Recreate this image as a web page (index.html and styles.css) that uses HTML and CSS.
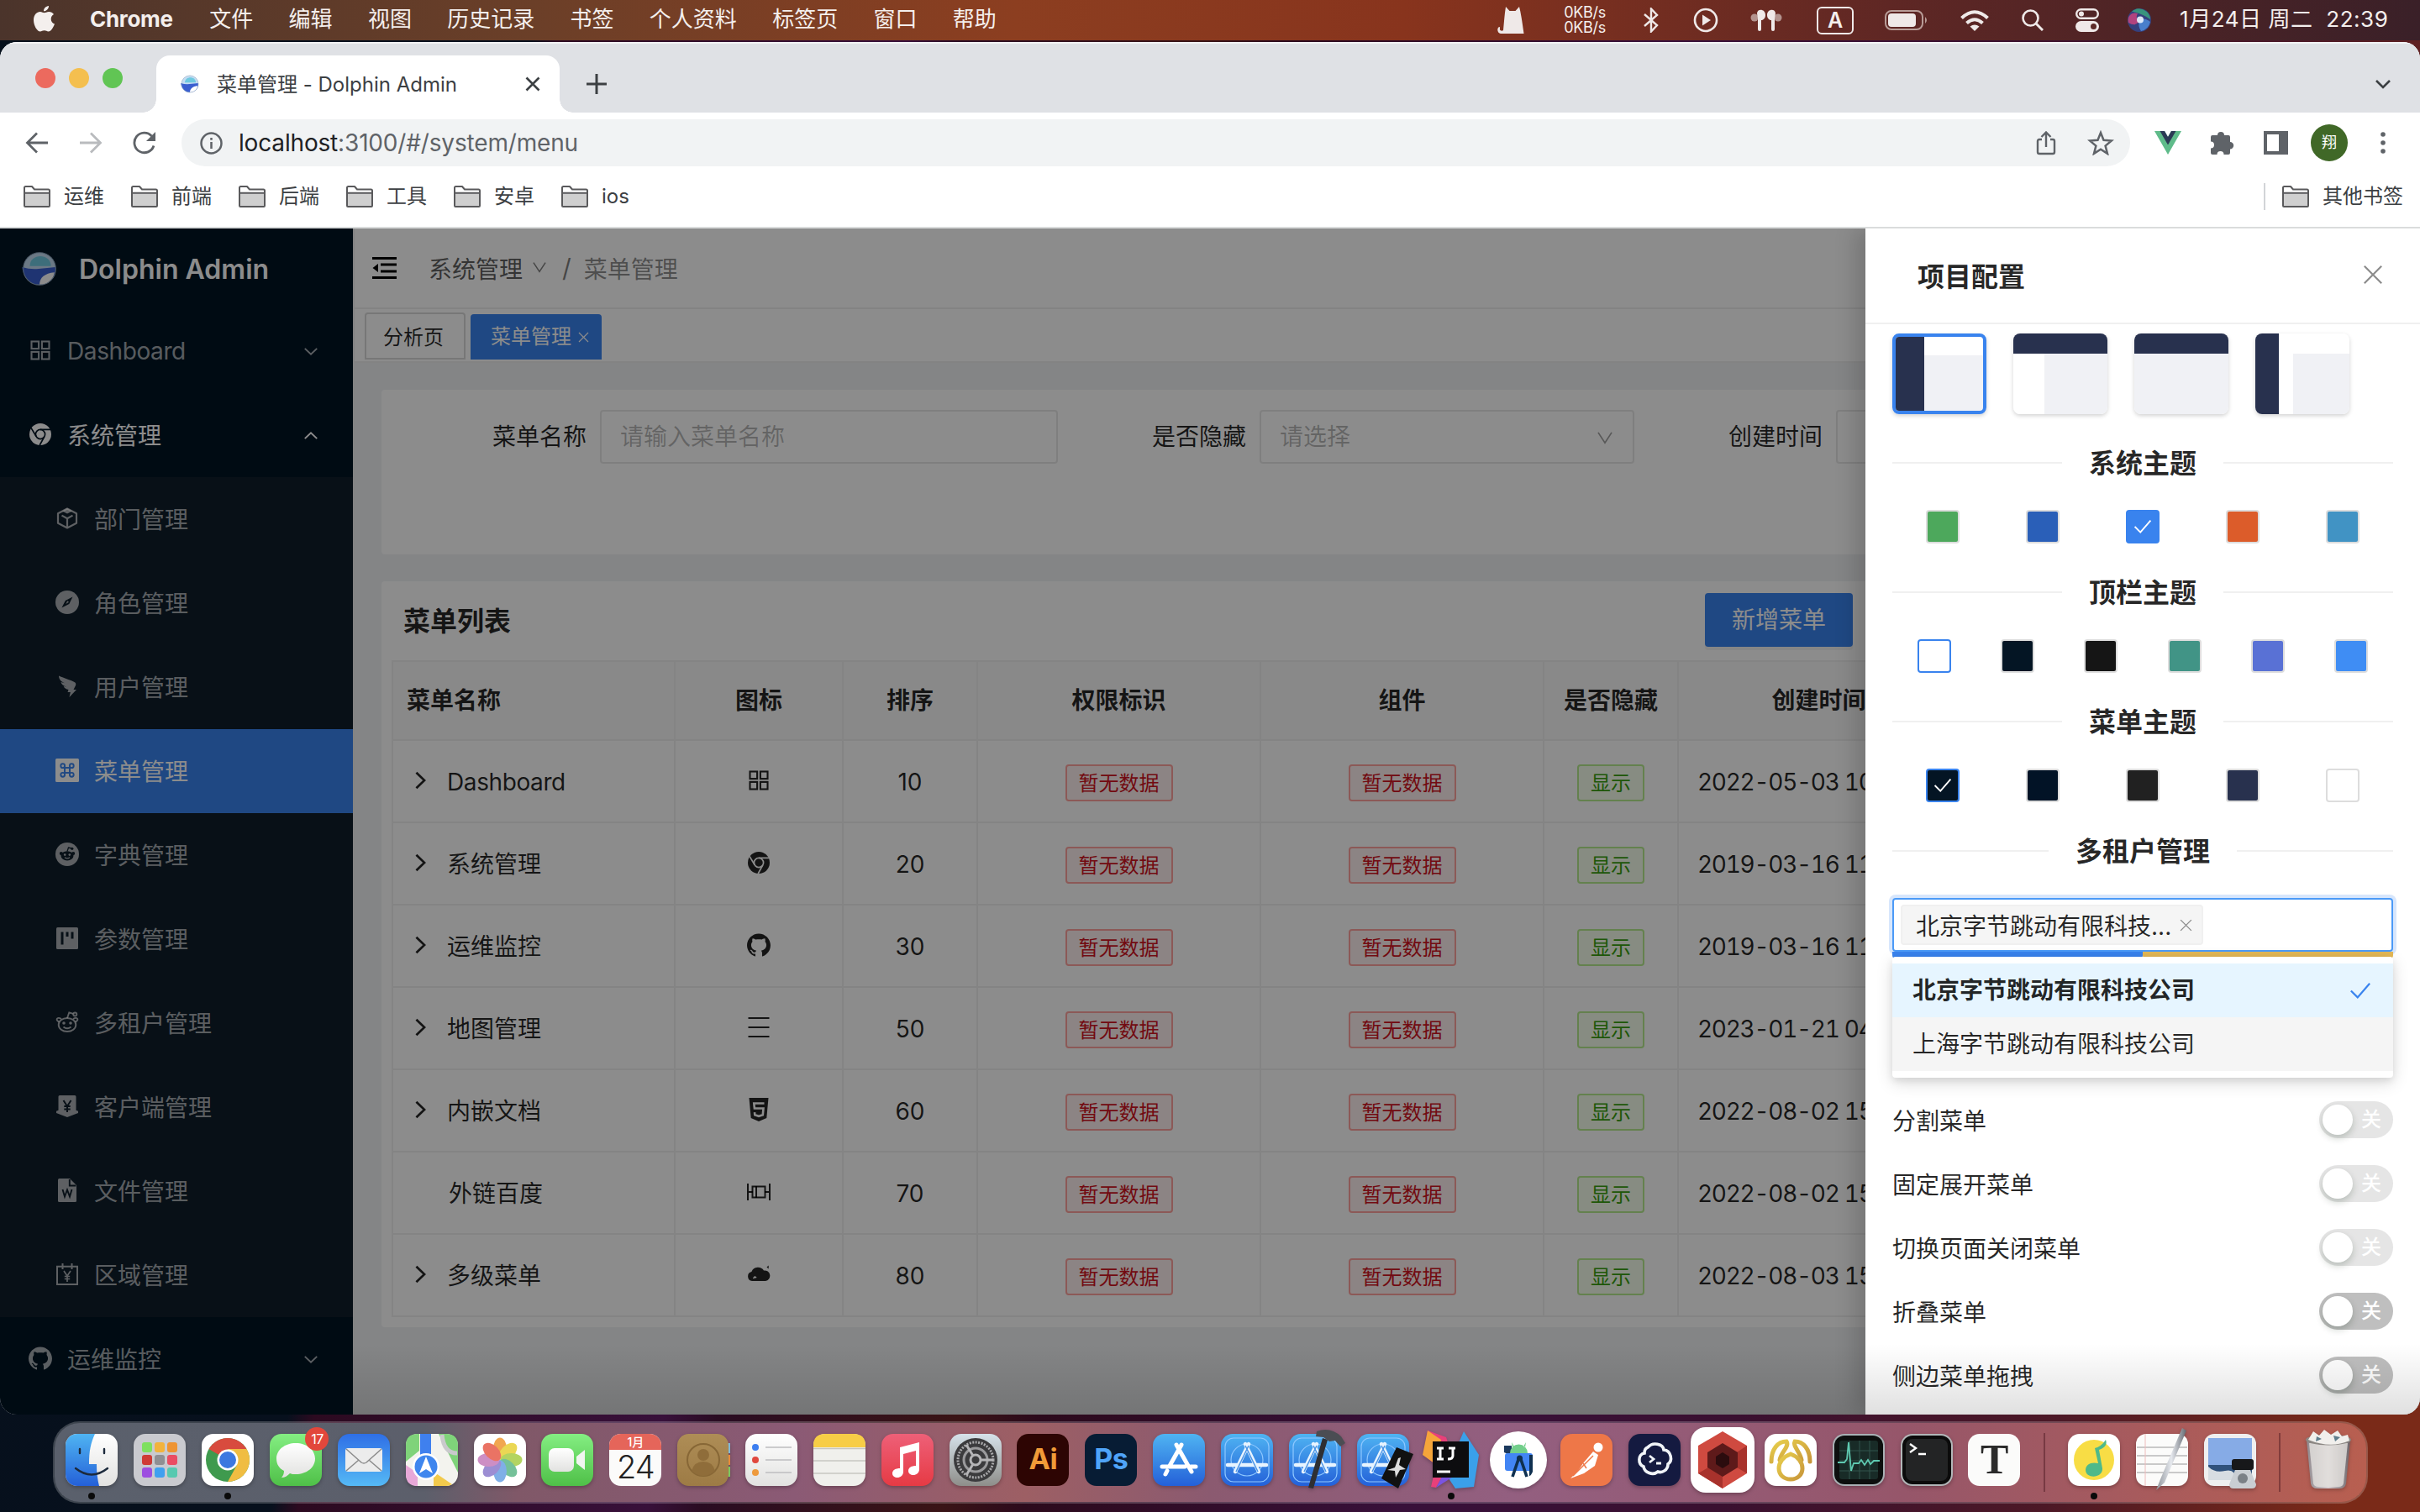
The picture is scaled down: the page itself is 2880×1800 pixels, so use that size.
FILE: index.html
```html
<!DOCTYPE html>
<html lang="zh-CN">
<head>
<meta charset="utf-8">
<title>菜单管理 - Dolphin Admin</title>
<link rel="stylesheet" href="styles.css">
</head>
<body>
<svg class="defs" width="0" height="0">
  <defs>
    <linearGradient id="g-blue" x1="0" y1="0" x2="0" y2="1"><stop offset="0" stop-color="#4fb4f2"/><stop offset="1" stop-color="#2460d8"/></linearGradient>
    <linearGradient id="g-mail" x1="0" y1="0" x2="0" y2="1"><stop offset="0" stop-color="#2f6fe6"/><stop offset="1" stop-color="#55b9f5"/></linearGradient>
    <linearGradient id="g-green" x1="0" y1="0" x2="0" y2="1"><stop offset="0" stop-color="#84ee82"/><stop offset="1" stop-color="#4fc048"/></linearGradient>
    <linearGradient id="g-red" x1="0" y1="0" x2="0" y2="1"><stop offset="0" stop-color="#ee6078"/><stop offset="1" stop-color="#e63a44"/></linearGradient>
    <linearGradient id="g-white" x1="0" y1="0" x2="0" y2="1"><stop offset="0" stop-color="#ffffff"/><stop offset="1" stop-color="#e2e2e0"/></linearGradient>
    <linearGradient id="g-gray" x1="0" y1="0" x2="0" y2="1"><stop offset="0" stop-color="#d6e2ea"/><stop offset="1" stop-color="#8e8e8a"/></linearGradient>
    <linearGradient id="g-gold" x1="0" y1="0" x2="1" y2="1"><stop offset="0" stop-color="#e8cf4c"/><stop offset="1" stop-color="#c8963a"/></linearGradient>
    <linearGradient id="g-brown" x1="0" y1="0" x2="0" y2="1"><stop offset="0" stop-color="#ae8d56"/><stop offset="1" stop-color="#9d7b45"/></linearGradient>
    <linearGradient id="g-steel" x1="0" y1="0" x2="1" y2="0"><stop offset="0" stop-color="#8d9299"/><stop offset=".5" stop-color="#e6e9ee"/><stop offset="1" stop-color="#62676f"/></linearGradient>
    <radialGradient id="g-siri"><stop offset="0" stop-color="#eaf6ff"/><stop offset=".35" stop-color="#5d8fd8"/><stop offset=".7" stop-color="#3a4a90"/><stop offset="1" stop-color="#37987a"/></radialGradient>
    <symbol id="i-appstore" viewBox="0 0 28 28"><g fill="none" stroke="currentColor" stroke-width="2.1"><rect x="3.5" y="3.5" width="8.6" height="8.6"/><rect x="15.9" y="3.5" width="8.6" height="8.6"/><rect x="3.5" y="15.9" width="8.6" height="8.6"/><rect x="15.9" y="15.9" width="8.6" height="8.6"/></g></symbol>
    <symbol id="i-chrome" viewBox="0 0 28 28"><circle cx="14" cy="14" r="13" fill="currentColor"/><g fill="none" stroke="var(--cut)" stroke-width="1.7"><circle cx="14" cy="14" r="5.6"/><path d="M14 8.4H26M9.2 16.8 3 6.4M18.8 16.8 13.2 27"/></g></symbol>
    <symbol id="i-github" viewBox="64 64 896 896"><path fill="currentColor" d="M511.6 76.3C264.3 76.2 64 276.4 64 523.5 64 718.9 189.3 885 363.8 946c23.5 5.9 19.9-10.8 19.9-22.2v-77.5c-135.7 15.9-141.2-73.9-150.3-88.9C215 726 171.5 718 184.5 703c30.9-15.9 62.4 4 98.9 57.9 26.4 39.1 77.9 32.5 104 26 5.7-23.5 17.9-44.5 34.7-60.8-140.6-25.2-199.2-111-199.2-213 0-49.5 16.3-95 48.3-131.7-20.4-60.5 1.9-112.3 4.9-120 58.1-5.2 118.5 41.6 123.2 45.3 33-8.9 70.7-13.6 112.9-13.6 42.4 0 80.2 4.9 113.5 13.9 11.3-8.6 67.3-48.8 121.3-43.9 2.9 7.7 24.7 58.3 5.5 118 32.4 36.8 48.9 82.7 48.9 132.3 0 102.2-59 188.1-200 212.9a127.5 127.5 0 0138.1 91v112.5c.8 9 0 17.9 15 17.9 177.1-59.7 304.6-227 304.6-424.1 0-247.2-200.4-447.3-447.5-447.3z"/></symbol>
    <symbol id="i-cube" viewBox="0 0 28 28"><path fill="none" stroke="currentColor" stroke-width="2.2" stroke-linejoin="round" d="M14 2.5 25 8.3v11.4L14 25.5 3 19.7V8.3zM14 25V14.5M7.5 10.6 14 14.3l6.5-3.7"/><path fill="currentColor" d="m14 2 6 3.4-6 3.2-6-3.2z"/></symbol>
    <symbol id="i-compass" viewBox="0 0 28 28"><circle cx="14" cy="14" r="14" fill="currentColor"/><path fill="var(--cut)" d="M20.5 7.5 16.3 16 7.5 20.5 11.8 12z"/><path fill="currentColor" d="m14.2 12.2 1.8 1.6-3.6 2.2z"/></symbol>
    <symbol id="i-wing" viewBox="0 0 28 28"><path fill="currentColor" d="M4 1.5c5 2.4 14 5 18.500 7.500 2 1 2 2.500 1.500 4l-2.500 5h3.500L16.500 27l1.300-6H14.500l1-3c-3-.5-5-2-5.800-4l3.300.6C9 13 7 11.500 6.500 9l4.500 1.200C7 8.500 4 6 4 1.500z"/></symbol>
    <symbol id="i-command" viewBox="0 0 28 28"><rect width="28" height="28" rx="1.500" fill="currentColor"/><g fill="none" stroke="var(--cut)" stroke-width="1.900"><rect x="11" y="11" width="6" height="6"/><circle cx="8.700" cy="8.700" r="2.400"/><circle cx="19.300" cy="8.700" r="2.400"/><circle cx="8.700" cy="19.300" r="2.400"/><circle cx="19.300" cy="19.300" r="2.400"/></g></symbol>
    <symbol id="i-reddit-f" viewBox="0 0 28 28"><circle cx="14" cy="14" r="14" fill="currentColor"/><ellipse cx="14" cy="15.800" rx="7.500" ry="5.600" fill="var(--cut)"/><circle cx="6.800" cy="13" r="2" fill="var(--cut)"/><circle cx="21.200" cy="13" r="2" fill="var(--cut)"/><path d="M14 10.500 15.500 6l4 1" fill="none" stroke="var(--cut)" stroke-width="1.300"/><circle cx="19.800" cy="7.300" r="1.600" fill="var(--cut)"/><circle cx="11.200" cy="14.600" r="1.300" fill="currentColor"/><circle cx="16.800" cy="14.600" r="1.300" fill="currentColor"/><path d="M11 17.800q3 2.200 6 0" fill="none" stroke="currentColor" stroke-width="1.200"/></symbol>
    <symbol id="i-reddit" viewBox="0 0 28 28"><g fill="none" stroke="currentColor" stroke-width="1.900"><ellipse cx="14" cy="17" rx="10.300" ry="8"/><path d="M4.500 13.500C-.5 12 1.500 6.500 7 10M23.500 13.500C28.500 12 26.500 6.500 21 10M14 9l2.300-6.500 5 1.400"/><circle cx="23.300" cy="4.500" r="2"/><path d="M9.500 19.500q4.500 3.600 9 0"/></g><circle cx="10" cy="15" r="1.800" fill="currentColor"/><circle cx="18" cy="15" r="1.800" fill="currentColor"/></symbol>
    <symbol id="i-project" viewBox="0 0 28 28"><rect x="1" y="1" width="26" height="26" rx="1.500" fill="currentColor"/><path fill="var(--cut)" d="M6.500 6.500h3v15h-3zM12.500 6.500h3V12h-3zM18.500 6.500h3v8h-3z"/></symbol>
    <symbol id="i-badge" viewBox="0 0 28 28"><path fill="currentColor" d="M3.500 2.500Q3.500 1 5 1h18q1.500 0 1.500 1.500v16.300l2.500 1V22l-13 5L1 22v-2.200l2.500-1z"/><path fill="none" stroke="var(--cut)" stroke-width="2" d="m9.500 7 4.500 7 4.500-7M14 13v8M10.300 14h7.400M10.300 17.500h7.400"/></symbol>
    <symbol id="i-word" viewBox="0 0 28 28"><path fill="currentColor" d="M4.500 0H17l8 8v18.500Q25 28 23.500 28h-19Q3 28 3 26.500v-25Q3 0 4.500 0z"/><path fill="none" stroke="var(--cut)" stroke-width="1.900" d="M16.800 1v7.500h7.500M8.500 13l2.500 8.500 3-8 3 8 2.500-8.500"/></symbol>
    <symbol id="i-calyen" viewBox="0 0 28 28"><path fill="none" stroke="currentColor" stroke-width="2" d="M2 4.800h24V26H2zM8.500 1v7M19.500 1v7"/><path fill="none" stroke="currentColor" stroke-width="1.700" d="m10 10 4 6 4-6M14 15.500V23M10.800 16.500h6.400M10.800 19.500h6.400"/></symbol>
    <symbol id="i-bars" viewBox="0 0 28 28"><path stroke="currentColor" stroke-width="2" d="M1.500 3h25M1.500 14h25M1.500 25h25"/></symbol>
    <symbol id="i-html5" viewBox="0 0 28 28"><path fill="currentColor" d="M2.500 0h23l-2.200 24L14 28l-9.300-4z"/><path fill="none" stroke="var(--cut)" stroke-width="2.600" d="M20.500 6.500H8.300l.6 6h10.600l-.7 7.700-4.800 1.600-4.700-1.600-.3-3"/></symbol>
    <symbol id="i-flow" viewBox="0 0 28 28"><g fill="none" stroke="currentColor" stroke-width="2"><path d="M1 4v20M27 4v20M1 14h6M21 14h6M11 7v14"/><rect x="6.500" y="7.500" width="15" height="13"/></g></symbol>
    <symbol id="i-cloud" viewBox="0 0 28 28"><path fill="currentColor" d="M6 22a5.600 5.600 0 0 1-.6-11A8.300 8.300 0 0 1 20 9.500 6.300 6.300 0 0 1 22 22zM23.500 5.500l2.200-2v4z"/><path d="m7.500 19 1.800-2 1.800 1.200" fill="none" stroke="var(--cut)" stroke-width="1.600"/></symbol>
    <symbol id="i-down" viewBox="0 0 20 12"><path fill="none" stroke="currentColor" stroke-width="2.200" d="m2 2 8 7.500L18 2"/></symbol>
    <symbol id="i-down-thin" viewBox="0 0 20 18"><path fill="none" stroke="currentColor" stroke-width="1.800" d="m1.500 2 8.500 13L18.500 2"/></symbol>
    <symbol id="i-x" viewBox="0 0 20 20"><path fill="none" stroke="currentColor" stroke-width="1.800" d="m1.500 1.500 17 17m0-17-17 17"/></symbol>
    <symbol id="i-check" viewBox="0 0 28 22"><path fill="none" stroke="currentColor" stroke-width="2.400" d="m2 11 8.500 8.500L26 1.500"/></symbol>
    <symbol id="i-right" viewBox="0 0 14 24"><path fill="none" stroke="currentColor" stroke-width="3" d="m1.500 2 10.500 10L1.500 22"/></symbol>
    <symbol id="i-folder" viewBox="0 0 32 26"><path fill="#cfcfcf" d="M2 9h28v15H2z"/><path fill="none" stroke="#5a5a5c" stroke-width="2" stroke-linejoin="round" d="M1 24V2.500Q1 1 2.500 1H10l3 3.500h16.500Q31 4.500 31 6v18q0 1-1 1H2q-1 0-1-1zM1 8.700h30"/></symbol>
    <symbol id="i-dolphin" viewBox="0 0 44 40"><circle cx="22" cy="20" r="18.500" fill="#c3dcf3"/><path fill="#6fc9e0" d="M11 17C11 2 35 2 35 17z"/><path fill="#3a5fd0" d="M2 18q10 3 19 2 10-1 19-2c2 12-8 20-18 20S4 31 2 18z"/><path fill="#fff" d="M22 38c0-8 6-13 17-14-1 9-8 14-17 14z"/><circle cx="22" cy="20" r="18.500" fill="none" stroke="#8ea6bd" stroke-width="1"/></symbol>
    <symbol id="d-proto" viewBox="0 0 64 64"><rect x="1" y="1" width="62" height="62" rx="14" fill="url(#g-blue)"/><rect x="6" y="6" width="52" height="52" rx="10" fill="none" stroke="#8fc8ff" stroke-width="1.200"/><circle cx="32" cy="32" r="19" fill="none" stroke="#8fc8ff" stroke-width="1.200"/><path fill="none" stroke="#e8f4ff" stroke-width="4.500" stroke-linecap="round" d="m34 13-16 33M30 13l16 33M9 38h46"/><path stroke="#4b94e6" stroke-width="1.500" d="m34 15-15 31M30 15l15 31"/></symbol>
  </defs>
</svg>

<div class="screen">
  <header class="menubar">
    <svg class="apple" viewBox="0 0 25 31"><path fill="#f4efed" d="M18 0c.3 3-2.700 6.500-6 6.300C11.700 3.300 14.800.2 18 0zM12.500 8.300C14 8.300 15.600 7 18.300 7c2.200 0 4.300 1.200 5.700 3-5 3-4 9.800 1 11.500C23.600 25.500 20.800 30.500 17.600 30.500c-2 0-2.600-1.200-4.900-1.200s-3 1.200-4.900 1.200C4.600 30.500 0 24 0 17 0 10.600 4 7 7.700 7c2.200 0 3.600 1.300 4.800 1.300z"/></svg>
    <nav class="mb-menu"><b>Chrome</b><span>文件</span><span>编辑</span><span>视图</span><span>历史记录</span><span>书签</span><span>个人资料</span><span>标签页</span><span>窗口</span><span>帮助</span></nav>
    <div class="mb-status">
      <svg width="33" height="32" viewBox="0 0 33 32"><path fill="#efe9e8" d="M10 0l4.500 5h7L26 0c2 8 3 14 5.500 32H4C0 32-1 26 2 24c1.500 0 1 2 .8 3 1 2 3 2 4.200 1C8 18 8.500 9 10 0z"/></svg>
      <div class="kb"><span>0KB/s</span><span>0KB/s</span></div>
      <svg width="20" height="30" viewBox="0 0 20 30"><path fill="none" stroke="#efe9e8" stroke-width="2.400" d="M2 8l15 13-7 7.500V1.500L17 9 2 22"/></svg>
      <svg width="30" height="30" viewBox="0 0 30 30"><circle cx="15" cy="15" r="13" fill="none" stroke="#efe9e8" stroke-width="2.600"/><path fill="#efe9e8" d="M11 8.500 21 15l-10 6.500z"/></svg>
      <svg width="38" height="28" viewBox="0 0 38 28"><g fill="#efe9e8"><path d="M8 6c0-6 10-6 10 2 0 4-3 6-5 6v11q0 2-2 2t-2-2V12zM30 6c0-6-10-6-10 2 0 4 3 6 5 6v11q0 2 2 2t2-2V12z"/><circle cx="5" cy="11" r="4.500" opacity=".55"/><circle cx="33" cy="11" r="4.500" opacity=".55"/></g></svg>
      <div class="ime">A</div>
      <svg width="52" height="24" viewBox="0 0 52 24"><rect x="1" y="1" width="44" height="22" rx="7" fill="none" stroke="#b89c97" stroke-width="2"/><rect x="4" y="4" width="33" height="16" rx="4" fill="#efe9e8"/><path fill="#b89c97" d="M48 8q4 4 0 8z"/></svg>
      <svg width="34" height="25" viewBox="0 0 34 25"><g fill="none" stroke="#efe9e8" stroke-width="4"><path d="M1.500 9.500q15.500-14.500 31 0M7.500 15.500q9.500-8.500 19 0"/></g><path fill="#efe9e8" d="M11.500 19.500q5.500-4 11 0L17 25z"/></svg>
      <svg width="26" height="26" viewBox="0 0 26 26"><circle cx="10.500" cy="10.500" r="9" fill="none" stroke="#efe9e8" stroke-width="2.600"/><path stroke="#efe9e8" stroke-width="3" d="m17 17 8 8"/></svg>
      <svg width="28" height="28" viewBox="0 0 28 28"><rect x="1.200" y="1.200" width="25.600" height="10.600" rx="5.300" fill="none" stroke="#efe9e8" stroke-width="2.400"/><circle cx="7" cy="6.500" r="3" fill="#efe9e8"/><rect y="15" width="28" height="13" rx="6.500" fill="#efe9e8"/><circle cx="21.500" cy="21.500" r="3.500" fill="#5c2b28"/></svg>
      <svg width="28" height="28" viewBox="0 0 28 28"><circle cx="14" cy="14" r="14" fill="#35407e"/><path fill="#3aa27c" opacity=".85" d="M5 3.500Q14-3 23 4q4 4 4 9-8-6-22-9.500z"/><path fill="#c8447e" opacity=".85" d="M1 17C-1 8 6 4 12 6q-3 5 1 10-4 6-12 1z"/><path fill="#4f8fe0" opacity=".8" d="M14 14q6-4 13 2-2 9-11 11-4-6-2-13z"/><circle cx="15" cy="13.500" r="4" fill="#eef6ff" opacity=".9"/></svg>
      <time class="clock">1月24日 周二&nbsp; 22:39</time>
    </div>
  </header>

  <section class="window">
    <div class="tabstrip">
      <div class="lights"><i class="l-red"></i><i class="l-yellow"></i><i class="l-green"></i></div>
      <div class="tab"><svg class="fav" width="24" height="22"><use href="#i-dolphin"/></svg><span>菜单管理 - Dolphin Admin</span><svg class="tabx" viewBox="0 0 18 18"><path stroke="#3c4043" stroke-width="2.600" d="m1.500 1.500 15 15m0-15-15 15"/></svg></div>
      <svg class="plus" viewBox="0 0 24 24"><path stroke="#3c4043" stroke-width="3" d="M12 0v24M0 12h24"/></svg>
      <svg class="tabdown" viewBox="0 0 18 11"><path fill="none" stroke="#3c4043" stroke-width="2.600" d="m1 1 8 8 8-8"/></svg>
    </div>
    <div class="toolbar">
      <div class="navbtns">
        <svg width="28" height="26" viewBox="0 0 28 26"><path fill="none" stroke="#5f6368" stroke-width="2.800" d="M27 13H3M14 1.500 2.500 13 14 24.500"/></svg>
        <svg width="28" height="26" viewBox="0 0 28 26"><path fill="none" stroke="#b9bbbe" stroke-width="2.800" d="M1 13h24M14 1.500 25.500 13 14 24.500"/></svg>
        <svg width="28" height="28" viewBox="0 0 28 28"><path fill="none" stroke="#5f6368" stroke-width="2.800" d="M25 17.500A11.800 11.800 0 1 1 22.500 6"/><path fill="#5f6368" d="M27 1v11H16z"/></svg>
      </div>
      <div class="omnibox">
        <svg width="27" height="27" viewBox="0 0 27 27"><circle cx="13.500" cy="13.500" r="12" fill="none" stroke="#5f6368" stroke-width="2.500"/><path stroke="#5f6368" stroke-width="2.500" d="M13.500 12v8M13.500 7v2.700"/></svg>
        <span class="url"><em>localhost</em>:3100/#/system/menu</span>
        <svg class="share" width="24" height="30" viewBox="0 0 24 30"><path fill="none" stroke="#5f6368" stroke-width="2.400" d="M7 11H4q-2 0-2 2v13q0 2 2 2h16q2 0 2-2V13q0-2-2-2h-3M12 20V3M6.500 8 12 2.500 17.500 8"/></svg>
        <svg class="star" width="32" height="30" viewBox="0 0 32 30"><path fill="none" stroke="#5f6368" stroke-width="2.500" stroke-linejoin="miter" d="m16 3 3.500 8.800 9.400.7-7.300 6.100 2.400 9.300L16 22.800l-8 5.100 2.400-9.300-7.300-6.100 9.400-.7z"/></svg>
      </div>
      <div class="ext">
        <svg width="32" height="28" viewBox="0 0 32 28"><path fill="#5fbb8a" d="M0 0h12l4 7 4-7h12L16 28z"/><path fill="#2c3a55" d="M6.500 0H12l4 7 4-7h5.500L16 16.500z"/></svg>
        <svg width="30" height="30" viewBox="0 0 30 30"><path fill="#5f6368" d="M9 6a4 4 0 0 1 8 0h5q2 0 2 2v6a4.200 4.200 0 0 1 0 8.400V27q0 2-2 2h-5.500a4 4 0 0 0-8 0H3q-2 0-2-2v-5.500a4 4 0 0 0 0-8V8q0-2 2-2z"/></svg>
        <svg width="29" height="28" viewBox="0 0 29 28"><path fill="#5f6368" d="M0 0h29v28H0zm4 4v20h14V4z" fill-rule="evenodd"/></svg>
        <span class="avatar">翔</span>
        <svg width="6" height="28" viewBox="0 0 6 28"><g fill="#5f6368"><circle cx="3" cy="4" r="2.800"/><circle cx="3" cy="14" r="2.800"/><circle cx="3" cy="24" r="2.800"/></g></svg>
      </div>
    </div>
    <div class="bookmarks">
      <a><svg><use href="#i-folder"/></svg>运维</a><a><svg><use href="#i-folder"/></svg>前端</a><a><svg><use href="#i-folder"/></svg>后端</a><a><svg><use href="#i-folder"/></svg>工具</a><a><svg><use href="#i-folder"/></svg>安卓</a><a><svg><use href="#i-folder"/></svg>ios</a>
      <a class="other"><svg><use href="#i-folder"/></svg>其他书签</a>
    </div>

    <div class="app">
      <aside class="sidebar">
        <div class="brand"><svg width="46" height="42"><use href="#i-dolphin"/></svg><span>Dolphin Admin</span></div>
        <ul class="menu">
          <li class="top"><svg class="ic"><use href="#i-appstore"/></svg><span class="lat">Dashboard</span><svg class="arr"><use href="#i-down"/></svg></li>
          <li class="top open"><svg class="ic"><use href="#i-chrome"/></svg><span>系统管理</span><svg class="arr up"><use href="#i-down"/></svg></li>
          <li class="sub"><svg class="ic"><use href="#i-cube"/></svg><span>部门管理</span></li>
          <li class="sub"><svg class="ic"><use href="#i-compass"/></svg><span>角色管理</span></li>
          <li class="sub"><svg class="ic"><use href="#i-wing"/></svg><span>用户管理</span></li>
          <li class="sub active"><svg class="ic"><use href="#i-command"/></svg><span>菜单管理</span></li>
          <li class="sub"><svg class="ic"><use href="#i-reddit-f"/></svg><span>字典管理</span></li>
          <li class="sub"><svg class="ic"><use href="#i-project"/></svg><span>参数管理</span></li>
          <li class="sub"><svg class="ic"><use href="#i-reddit"/></svg><span>多租户管理</span></li>
          <li class="sub"><svg class="ic"><use href="#i-badge"/></svg><span>客户端管理</span></li>
          <li class="sub"><svg class="ic"><use href="#i-word"/></svg><span>文件管理</span></li>
          <li class="sub"><svg class="ic"><use href="#i-calyen"/></svg><span>区域管理</span></li>
          <li class="top"><svg class="ic"><use href="#i-github"/></svg><span>运维监控</span><svg class="arr"><use href="#i-down"/></svg></li>
        </ul>
      </aside>
      <main class="main">
        <div class="crumbs">
          <svg class="fold" viewBox="0 0 29 26"><path stroke="#000" stroke-width="2.800" d="M0 1.500h29M10 9h19M10 17h19M0 24.500h29"/><path d="M7 8v10l-6.500-5z"/></svg>
          <span class="c1">系统管理</span><svg class="cd"><use href="#i-down-thin"/></svg><span class="slash">/</span><span class="c2">菜单管理</span>
        </div>
        <div class="pagetabs"><span class="pt">分析页</span><span class="pt on">菜单管理<svg><use href="#i-x"/></svg></span></div>
        <div class="content">
          <section class="card filter">
            <label class="f1">菜单名称</label><div class="box b1">请输入菜单名称</div>
            <label class="f2">是否隐藏</label><div class="box b2">请选择<svg><use href="#i-down-thin"/></svg></div>
            <label class="f3">创建时间</label><div class="box b3"></div>
          </section>
          <section class="card list">
            <div class="list-head"><h2>菜单列表</h2><button>新增菜单</button></div>
            <table>
              <colgroup><col class="k1"><col class="k2"><col class="k3"><col class="k4"><col class="k5"><col class="k6"><col class="k7"></colgroup>
              <thead><tr><th class="nm">菜单名称</th><th>图标</th><th>排序</th><th>权限标识</th><th>组件</th><th>是否隐藏</th><th>创建时间</th></tr></thead>
              <tbody>
                <tr><td class="nm"><svg class="ex"><use href="#i-right"/></svg><span class="lat">Dashboard</span></td><td><svg class="ti"><use href="#i-appstore"/></svg></td><td>10</td><td><i class="tag r">暂无数据</i></td><td><i class="tag r">暂无数据</i></td><td><i class="tag g">显示</i></td><td class="dt">2022-05-03 10</td></tr>
                <tr><td class="nm"><svg class="ex"><use href="#i-right"/></svg>系统管理</td><td><svg class="ti"><use href="#i-chrome"/></svg></td><td>20</td><td><i class="tag r">暂无数据</i></td><td><i class="tag r">暂无数据</i></td><td><i class="tag g">显示</i></td><td class="dt">2019-03-16 11</td></tr>
                <tr><td class="nm"><svg class="ex"><use href="#i-right"/></svg>运维监控</td><td><svg class="ti"><use href="#i-github"/></svg></td><td>30</td><td><i class="tag r">暂无数据</i></td><td><i class="tag r">暂无数据</i></td><td><i class="tag g">显示</i></td><td class="dt">2019-03-16 11</td></tr>
                <tr><td class="nm"><svg class="ex"><use href="#i-right"/></svg>地图管理</td><td><svg class="ti"><use href="#i-bars"/></svg></td><td>50</td><td><i class="tag r">暂无数据</i></td><td><i class="tag r">暂无数据</i></td><td><i class="tag g">显示</i></td><td class="dt">2023-01-21 04</td></tr>
                <tr><td class="nm"><svg class="ex"><use href="#i-right"/></svg>内嵌文档</td><td><svg class="ti"><use href="#i-html5"/></svg></td><td>60</td><td><i class="tag r">暂无数据</i></td><td><i class="tag r">暂无数据</i></td><td><i class="tag g">显示</i></td><td class="dt">2022-08-02 15</td></tr>
                <tr><td class="nm leaf">外链百度</td><td><svg class="ti"><use href="#i-flow"/></svg></td><td>70</td><td><i class="tag r">暂无数据</i></td><td><i class="tag r">暂无数据</i></td><td><i class="tag g">显示</i></td><td class="dt">2022-08-02 15</td></tr>
                <tr><td class="nm"><svg class="ex"><use href="#i-right"/></svg>多级菜单</td><td><svg class="ti"><use href="#i-cloud"/></svg></td><td>80</td><td><i class="tag r">暂无数据</i></td><td><i class="tag r">暂无数据</i></td><td><i class="tag g">显示</i></td><td class="dt">2022-08-03 15</td></tr>
              </tbody>
            </table>
          </section>
        </div>
      </main>
      <div class="mask"></div>
      <aside class="drawer">
        <div class="dr-head"><h3>项目配置</h3><svg><use href="#i-x"/></svg></div>
        <div class="dr-body">
          <div class="thumbs"><div class="th t1"><i></i></div><div class="th t2"><i></i></div><div class="th t3"></div><div class="th t4"><i></i></div></div>
          <div class="divider"><span>系统主题</span></div>
          <div class="swatches"><i class="s-green"></i><i class="s-blue"></i><i class="s-main"><svg><use href="#i-check"/></svg></i><i class="s-orange"></i><i class="s-cyan"></i></div>
          <div class="divider"><span>顶栏主题</span></div>
          <div class="swatches"><i class="s-white sel"></i><i class="s-navy"></i><i class="s-black"></i><i class="s-teal"></i><i class="s-indigo"></i><i class="s-sky"></i></div>
          <div class="divider"><span>菜单主题</span></div>
          <div class="swatches"><i class="s-navy sel"><svg><use href="#i-check"/></svg></i><i class="s-navy2"></i><i class="s-dark"></i><i class="s-slate"></i><i class="s-white"></i></div>
          <div class="divider"><span>多租户管理</span></div>
          <div class="tenant">
            <div class="select"><span class="chip">北京字节跳动有限科技...<svg><use href="#i-x"/></svg></span></div>
            <div class="actions"><i></i><i></i></div>
            <div class="dropdown"><div class="opt cur">北京字节跳动有限科技公司<svg><use href="#i-check"/></svg></div><div class="opt">上海字节跳动有限科技公司</div></div>
          </div>
          <div class="switches">
            <div class="row"><span>分割菜单</span><b class="sw off">关</b></div>
            <div class="row"><span>固定展开菜单</span><b class="sw off">关</b></div>
            <div class="row"><span>切换页面关闭菜单</span><b class="sw off">关</b></div>
            <div class="row"><span>折叠菜单</span><b class="sw">关</b></div>
            <div class="row"><span>侧边菜单拖拽</span><b class="sw">关</b></div>
          </div>
        </div>
      </aside>
      <div class="shade"></div>
    </div>
  </section>

  <footer class="dock">
    <div class="d run"><svg viewBox="0 0 64 64"><rect x="1" y="1" width="62" height="62" rx="14" fill="url(#g-white)"/><path fill="url(#g-blue)" d="M15 1h21c-5 11-7 20-7 36h9c0 10 1 18 3 26H15A14 14 0 0 1 1 49V15A14 14 0 0 1 15 1z"/><path fill="none" stroke="#1c2a3c" stroke-width="2.400" stroke-linecap="round" d="M18 19v5M47 19v5M13 42q19 15 38 0"/></svg></div>
    <div class="d"><svg viewBox="0 0 64 64"><rect x="1" y="1" width="62" height="62" rx="14" fill="#c9cacf"/><g><rect x="11" y="11" width="12" height="12" rx="3" fill="#7ee05f"/><rect x="26" y="11" width="12" height="12" rx="3" fill="#f2b33c"/><rect x="41" y="11" width="12" height="12" rx="3" fill="#ee9432"/><rect x="11" y="26" width="12" height="12" rx="3" fill="#cf3b36"/><rect x="26" y="26" width="12" height="12" rx="3" fill="#8f8f93"/><rect x="41" y="26" width="12" height="12" rx="3" fill="#ea4d63"/><rect x="11" y="41" width="12" height="12" rx="3" fill="#9d4fe0"/><rect x="26" y="41" width="12" height="12" rx="3" fill="#3fa0f0"/><rect x="41" y="41" width="12" height="12" rx="3" fill="#57c9b0"/></g></svg></div>
    <div class="d run"><svg viewBox="0 0 64 64"><rect x="1" y="1" width="62" height="62" rx="14" fill="#fff"/><circle cx="32" cy="32" r="26" fill="#3f9a4e"/><path fill="#d84b3e" d="M32 32 9.500 19A26 26 0 0 1 54.500 19H32z"/><path fill="#f0bd42" d="M32 58a26 26 0 0 0 22.500-39H32l11 19z"/><circle cx="32" cy="32" r="12.500" fill="#fff"/><circle cx="32" cy="32" r="10" fill="#3c78e0"/></svg></div>
    <div class="d"><svg viewBox="0 0 64 64"><rect x="1" y="1" width="62" height="62" rx="14" fill="url(#g-green)"/><path fill="url(#g-white)" d="M32 12c13 0 23 8 23 18.500S45 49 32 49c-3 0-5 0-7-1-3 3-6 5-10 5 2-2 3-5 3-8C12 42 9 37 9 30.500 9 20 19 12 32 12z"/></svg><span class="badge">17</span></div>
    <div class="d"><svg viewBox="0 0 64 64"><rect x="1" y="1" width="62" height="62" rx="14" fill="url(#g-mail)"/><rect x="10" y="18" width="44" height="28" rx="3" fill="#ececec"/><path fill="none" stroke="#8b8b8b" stroke-width="1.500" d="m11 19 18 16q3 2 6 0l18-16M11 45l15-13M53 45 38 32"/></svg></div>
    <div class="d"><svg viewBox="0 0 64 64"><rect x="1" y="1" width="62" height="62" rx="14" fill="#f3f3ee"/><path fill="#7fd37a" d="M1 34V15Q1 1 15 1h2v20zM40 1h9q14 0 14 14v32z"/><path fill="#e7a8d8" d="M1 38l14 10v15Q1 63 1 49z"/><path fill="#f2ca4c" d="M34 63V46l22 15q-3 2-7 2z"/><path fill="#3f80ee" d="M18 1h13v30H18z"/><path fill="none" stroke="#c9c9cc" stroke-width="5" d="M44 2q2 22 18 22"/><circle cx="25" cy="40" r="16" fill="#fff"/><circle cx="25" cy="40" r="13.500" fill="#3f86ee"/><path fill="#fff" d="m25 28 8 20-8-5-8 5z"/></svg></div>
    <div class="d"><svg viewBox="0 0 64 64"><rect x="1" y="1" width="62" height="62" rx="14" fill="#fff"/><g opacity=".88"><ellipse cx="32" cy="18.500" rx="8" ry="13" fill="#f09a38"/><ellipse cx="32" cy="18.500" rx="8" ry="13" fill="#e8d23d" transform="rotate(45 32 32)"/><ellipse cx="32" cy="18.500" rx="8" ry="13" fill="#a9cf4c" transform="rotate(90 32 32)"/><ellipse cx="32" cy="18.500" rx="8" ry="13" fill="#63b98c" transform="rotate(135 32 32)"/><ellipse cx="32" cy="18.500" rx="8" ry="13" fill="#6ea5e4" transform="rotate(180 32 32)"/><ellipse cx="32" cy="18.500" rx="8" ry="13" fill="#8f7fce" transform="rotate(225 32 32)"/><ellipse cx="32" cy="18.500" rx="8" ry="13" fill="#c77fbc" transform="rotate(270 32 32)"/><ellipse cx="32" cy="18.500" rx="8" ry="13" fill="#e8604f" transform="rotate(315 32 32)"/></g></svg></div>
    <div class="d"><svg viewBox="0 0 64 64"><rect x="1" y="1" width="62" height="62" rx="14" fill="url(#g-green)"/><rect x="10" y="18" width="30" height="28" rx="7" fill="url(#g-white)"/><path fill="#f1f5f0" d="m43 28 10-8v24l-10-8z"/></svg></div>
    <div class="d cal"><div><b>1月</b><span>24</span></div></div>
    <div class="d"><svg viewBox="0 0 64 64"><path fill="#7fb8d8" d="M60 12h4v12h-4z"/><path fill="#e88a3a" d="M60 26h4v12h-4z"/><path fill="#7cc860" d="M60 40h4v12h-4z"/><rect x="1" y="1" width="61" height="62" rx="14" fill="url(#g-brown)"/><circle cx="32" cy="32" r="19" fill="none" stroke="#876736" stroke-width="2"/><circle cx="32" cy="26" r="7" fill="#8f6d3a"/><path fill="#8f6d3a" d="M18 45q3-11 14-11t14 11q-14 12-28 0z"/></svg></div>
    <div class="d"><svg viewBox="0 0 64 64"><rect x="1" y="1" width="62" height="62" rx="14" fill="url(#g-white)"/><path stroke="#bdbdc0" stroke-width="1.500" d="M25 17h31M25 32h31M25 47h31"/><g stroke-width="1.500"><circle cx="13" cy="17" r="4" fill="#3c7ef0"/><circle cx="13" cy="32" r="4" fill="#e0483e"/><circle cx="13" cy="47" r="4" fill="#ee9a3c"/></g></svg></div>
    <div class="d"><svg viewBox="0 0 64 64"><rect x="1" y="1" width="62" height="62" rx="14" fill="#f0f0ec"/><path fill="#f7cd46" d="M15 1h34q14 0 14 14v2H1v-2Q1 1 15 1z"/><path stroke="#c6c6c1" stroke-width="1.500" d="M1 18.500h62M1 33h62M1 48h62"/></svg></div>
    <div class="d"><svg viewBox="0 0 64 64"><rect x="1" y="1" width="62" height="62" rx="14" fill="url(#g-red)"/><path fill="#fff" d="M23 17 46 11v32c0 9-13 9-13 2 0-4 4-6 9-6V21l-15 4v21c0 9-13 9-13 2 0-4 4-6 9-6z"/></svg></div>
    <div class="d"><svg viewBox="0 0 64 64"><rect x="1" y="1" width="62" height="62" rx="14" fill="url(#g-gray)"/><circle cx="32" cy="32" r="26" fill="#3b3b3d"/><circle cx="32" cy="32" r="21" fill="none" stroke="#a9a9ab" stroke-width="3" stroke-dasharray="2 1.500"/><circle cx="32" cy="32" r="14" fill="none" stroke="#9a9a9c" stroke-width="3"/><circle cx="32" cy="32" r="6" fill="none" stroke="#b5b5b7" stroke-width="3"/><path stroke="#b5b5b7" stroke-width="3" d="M38 32h15M29 27l-8-13M29 37l-8 13"/></svg></div>
    <div class="d txt ai"><div>Ai</div></div>
    <div class="d txt ps"><div>Ps</div></div>
    <div class="d"><svg viewBox="0 0 64 64"><rect x="1" y="1" width="62" height="62" rx="14" fill="url(#g-blue)"/><path fill="none" stroke="#fff" stroke-width="5" stroke-linecap="round" d="M35 14 21 39M29 14l18 32M12 40h27M46 40h6M18 45l-2 4"/></svg></div>
    <div class="d"><svg><use href="#d-proto"/></svg></div>
    <div class="d"><svg viewBox="0 0 64 64" class="ov"><use href="#d-proto" width="64" height="64"/><path fill="#2e2f33" d="m41 6 6 2-17 58-6-1z"/><path fill="#4b4d53" d="M34-2q16-6 29 6l5 8-6 4-6-7-7 1-7-5-9-1z"/></svg></div>
    <div class="d"><svg viewBox="0 0 64 64" class="ov"><use href="#d-proto" width="64" height="64"/><path fill="#111" d="m48 17 20 8-18 41-20-12z"/><path fill="#ddd" d="m50 30 3-1-2 9 8 5-7 1-5 9-1-8-9-1 9-3z"/></svg></div>
    <div class="d run"><svg viewBox="0 0 64 64" class="ov"><path fill="#e8407a" d="m4-3 22 8 8 24-20 36-6-1 6-26L-1 26z"/><path fill="#f5a53a" d="M4-3-2 26l14 10 8-28z"/><path fill="#3aa0ea" d="m40 14 7-16 18 28-6 38-22 2-8-12z"/><path fill="#7a54e0" d="m14 65 28-18-16-4z"/><rect x="10" y="10" width="43" height="43" fill="#0d0d0f"/><path fill="none" stroke="#fff" stroke-width="3" d="M15 18h8M19 18v13M15 31h8M29 18h8M34 18v9q0 4-6 4M15 46h16"/></svg></div>
    <div class="d"><svg viewBox="0 0 64 64" class="ov"><circle cx="32" cy="32" r="34" fill="#fff"/><path fill="#1c3a5e" d="M15 15h9v12l-9-4z"/><rect x="16" y="24" width="33" height="21" rx="3" fill="#4285f4"/><path fill="#72cf8b" d="M22 24a10.500 10.500 0 0 1 21 0zM24 11l3 5-2 1zM41 11l-3 5 2 1z"/><path fill="none" stroke="#0f3050" stroke-width="3.600" d="M32.500 30 25 52M34.500 30 42 52"/><circle cx="33.500" cy="30" r="3.500" fill="#0f3050"/><path fill="#0f3050" d="M45 26h4v20q-2 5-4 5z"/></svg></div>
    <div class="d"><svg viewBox="0 0 64 64"><rect x="1" y="1" width="62" height="62" rx="14" fill="#ee7748"/><circle cx="46" cy="17" r="5.500" fill="#fff"/><path fill="#fff" d="m40 22 6 4-4 13-13 9-16 6 9-9 6-9z"/><path fill="none" stroke="#ee7748" stroke-width="1.500" d="m16 51 24-24M28 36l4 6"/></svg></div>
    <div class="d"><svg viewBox="0 0 64 64"><rect x="1" y="1" width="62" height="62" rx="14" fill="#141a40"/><path fill="none" stroke="#f0f4f8" stroke-width="3.600" d="M24 17c6-7 18-4 19 3 9 1 11 13 5 17 0 7-7 11-12 9-6 5-16 1-17-6-7-3-7-15 1-16 0-3 1-6 4-7z"/><path fill="none" stroke="#f0f4f8" stroke-width="2.800" d="m26 27 5 4-5 4M34 36h6"/></svg></div>
    <div class="d"><svg viewBox="0 0 64 64" class="ov"><rect x="-6" y="-7" width="76" height="78" rx="18" fill="#fff"/><path fill="#cf4a40" d="M32-2 61 15v33L32 66 3 48V15z"/><path fill="#a8322c" d="m61 15-12 8v18l12 7zM3 48l12-7 17 10v15z"/><path fill="#5e1a1a" d="m32 12 18 11v18L32 52 14 41V23z"/><path fill="#2b0c0e" d="m32 23 8 5v9l-8 5-8-5v-9z"/></svg></div>
    <div class="d"><svg viewBox="0 0 64 64"><rect x="1" y="1" width="62" height="62" rx="14" fill="#fff"/><path fill="none" stroke="url(#g-gold)" stroke-width="5" stroke-linecap="round" d="M9 34c0-15 8-24 18-24 4 6-6 12-8 22M55 34c0-15-8-24-18-24-3 5 6 12 8 22"/><path fill="#fff" stroke="url(#g-gold)" stroke-width="5" d="M32 25c9 3 14 10 14 17 0 8-6 13-14 13s-14-5-14-13c0-7 5-14 14-17z"/></svg></div>
    <div class="d"><svg viewBox="0 0 64 64"><rect x="1" y="1" width="62" height="62" rx="14" fill="#a9b0b4"/><rect x="3" y="3" width="58" height="58" rx="12" fill="#0c0f0e"/><rect x="9" y="9" width="46" height="46" rx="3" fill="#182b27"/><path stroke="#31544c" d="M9 21h46M9 33h46M9 45h46M21 9v46M33 9v46M45 9v46"/><path fill="none" stroke="#5ec9b0" stroke-width="1.800" d="M7 35h8l3-4 2-20 3 34 3-9h6l3-4 4 6 4-6 3 5 4-4h7"/></svg></div>
    <div class="d"><svg viewBox="0 0 64 64"><rect x="1" y="1" width="62" height="62" rx="14" fill="#b2b6b8"/><rect x="3" y="3" width="58" height="58" rx="12" fill="#0b0b0b"/><rect x="7" y="7" width="50" height="50" rx="8" fill="#232425"/><path fill="none" stroke="#fff" stroke-width="2.400" d="m12 13 7 5-7 5M22 25h9"/></svg></div>
    <div class="d txt ty"><div>T</div></div>
    <div class="sep"></div>
    <div class="d run"><svg viewBox="0 0 64 64"><rect x="1" y="1" width="62" height="62" rx="14" fill="#fff"/><circle cx="32" cy="32" r="24" fill="#f8dd45"/><path fill="#4fb98a" d="M46 8q3 8-8 12l4 22c1 12-20 13-20 2 0-7 7-10 15-8l-4-18q8-2 13-10z"/></svg></div>
    <div class="d"><svg viewBox="0 0 64 64" class="ov"><rect x="1" y="1" width="62" height="62" rx="12" fill="#fbfbfa"/><path stroke="#b9b9b9" stroke-width="1.500" d="M2 17h60M2 27h60M2 37h60M2 47h60"/><path stroke="#eebcbc" d="M12 1v62"/><path fill="url(#g-steel)" d="m56-6 5 3-26 62-10 9 5-13z"/></svg></div>
    <div class="d"><svg viewBox="0 0 64 64" class="ov"><rect x="1" y="1" width="62" height="62" rx="12" fill="#efefef"/><rect x="6" y="6" width="52" height="36" fill="#86abe6"/><path fill="#30527c" d="M6 38h52v18H6z"/><path fill="#d7dde2" d="M6 40q8 8 20 5t14 11H6z"/><rect x="34" y="31" width="26" height="13" rx="3" fill="#17181a"/><path fill="#c9ced3" d="M38 44h18l7 17q0 5-5 5H36q-5 0-5-5z"/><circle cx="47" cy="54" r="6" fill="#7b8187"/></svg></div>
    <div class="sep s2"></div>
    <div class="d"><svg viewBox="0 0 64 64" class="ov"><path fill="url(#g-steel)" opacity=".85" d="M6 8h52l-5 52q-1 6-8 6H19q-7 0-8-6z"/><path fill="#e3e1dd" opacity=".8" d="M9 12h46l-5 48q-1 4-6 4H20q-5 0-6-4z"/><ellipse cx="32" cy="8" rx="27" ry="6.500" fill="#8c8884"/><path fill="#f1efec" d="m8 8 6-10 7 5 6-7 8 6 8-5 5 7 7-2 2 7q-22 10-49-1z"/><path fill="#5f7d8c" d="m18 4 6 3-7 3zM38 3l8 2-6 5z"/></svg></div>
  </footer>
</div>
</body>
</html>
```
FILE: styles.css
```css
* { box-sizing: border-box; }
body { margin: 0; font-family: Inter, "Noto Sans CJK SC", sans-serif; }
ul, h2, h3 { margin: 0; padding: 0; list-style: none; }
i, em { font-style: normal; }
svg { display: block; flex: none; }
.defs { position: absolute; }

.screen {
  width: 2880px; height: 1800px; overflow: hidden;
  display: flex; flex-direction: column;
  background: linear-gradient(100deg, #06101c 0, #07101d 20%, #2c0a20 21%, #38103a 34%, #2a0c22 36%, #3a1416 45%, #2c0a1c 48%, #38103a 62%, #3a1030 74%, #4c1826 86%, #7a2a18 97%);
}

/* menu bar */
.menubar {
  height: 48px; flex: none; display: flex; align-items: center; color: #f4efed; font-size: 26px;
  background: linear-gradient(90deg, #4b342b 0, #6b3f28 22%, #8c3e20 42%, #88341d 58%, #5f2724 78%, #3a2028 100%);
}
.apple { width: 25px; height: 31px; margin: 0 42px 4px 40px; }
.mb-menu { display: flex; gap: 42.300px; line-height: 46px; height: 48px; }
.mb-menu b { font-weight: 700; letter-spacing: -.3px; width: 100px; }
.mb-status {
  margin-left: auto; width: 1112px; height: 48px; display: grid; align-items: center; justify-items: center;
  grid-template-columns: 60px 116px 42px 88px 56px 108px 62px 100px 38px 92px 32px 318px;
}
.kb { display: flex; flex-direction: column; font-size: 18px; line-height: 18px; letter-spacing: -.3px; }
.ime { width: 44px; height: 33px; border: 2.500px solid #efe9e8; border-radius: 6px; font-size: 25px; font-weight: 600; line-height: 28px; text-align: center; }
.clock { justify-self: start; padding-left: 32px; line-height: 46px; height: 48px; white-space: nowrap; letter-spacing: .55px; }

/* browser chrome */
.window { height: 1634px; margin-top: 2px; flex: none; width: 2880px; display: flex; flex-direction: column; background: #fff; border-radius: 20px; overflow: hidden; }
.tabstrip { height: 84px; flex: none; background: #dfe1e5; display: flex; box-shadow: inset 0 2px 0 #f2f2f4; }
.lights { display: flex; gap: 16px; padding: 31px 52px 0 42px; width: 186px; }
.lights i { width: 24px; height: 24px; border-radius: 50%; flex: none; }
.l-red { background: #ec6a5e; } .l-yellow { background: #f4bf4f; } .l-green { background: #61c554; }
.tab { position: relative; width: 480px; margin-top: 16px; height: 68px; border-radius: 16px 16px 0 0; background: #fff; display: flex; align-items: center; font-size: 24px; color: #3c4043; padding-left: 28px; }
.tab::before, .tab::after { content: ""; position: absolute; bottom: 0; width: 16px; height: 16px; }
.tab::before { left: -16px; background: radial-gradient(circle at 0 0, transparent 15.500px, #fff 16px); }
.tab::after { right: -16px; background: radial-gradient(circle at 100% 0, transparent 15.500px, #fff 16px); }
.tab span { margin-left: 20px; flex: 1; white-space: nowrap; padding-bottom: 4px; }
.tabx { width: 18px; height: 18px; margin-right: 23px; }
.plus { width: 24px; height: 24px; margin: 38px 0 0 32px; }
.tabdown { width: 18px; height: 11px; margin: 45px 35px 0 auto; }
.toolbar { height: 72px; flex: none; display: flex; align-items: center; }
.navbtns { display: flex; gap: 36px; width: 216px; padding-left: 30px; align-items: center; }
.omnibox { width: 2319px; height: 56px; border-radius: 28px; background: #f1f3f4; display: flex; align-items: center; padding: 0 19px 0 22px; font-size: 28px; color: #5f6368; }
.url { margin-left: 19px; flex: 1; letter-spacing: -.17px; }
.url em { color: #202124; }
.share { margin-right: 37px; margin-bottom: 1px; }
.ext { display: flex; align-items: center; padding-left: 29px; }
.ext > :nth-child(2) { margin-left: 34px; } .ext > :nth-child(3) { margin-left: 34px; }
.avatar { width: 44px; height: 44px; margin: 0 39px 0 27px; border-radius: 50%; background: #406827; color: #fff; font-size: 18px; line-height: 44px; text-align: center; }
.bookmarks { height: 64px; flex: none; display: flex; padding: 0 20px 8px 28px; align-items: center; font-size: 24px; color: #3c4043; }
.bookmarks a { width: 128px; display: flex; align-items: center; gap: 16px; white-space: nowrap; line-height: 32px; }
.bookmarks svg { width: 32px; height: 26px; }
.bookmarks .other { width: 166px; margin-left: auto; border-left: 2px solid #d2d4d7; padding-left: 20px; }

/* application */
.app { border-top: 2px solid #dadcdc; height: 1414px; flex: none; display: flex; position: relative; overflow: hidden; }
.sidebar { width: 420px; flex: none; background: #001424; color: rgba(255,255,255,.65); --cut: #0f1e2b; font-size: 28px; }
.brand { height: 96px; display: flex; align-items: center; gap: 24px; padding-left: 24px; color: #fff; font-weight: 600; font-size: 32px; }
.menu li { height: 100px; display: flex; align-items: center; }
.menu .ic { width: 28px; height: 28px; margin-bottom: 2px; }
.menu span { padding-bottom: 2px; }
.menu .lat { padding-bottom: 0; }
.top { padding: 0 41px 0 34px; --cut: #001424; }
.menu .top span { margin-left: 18px; flex: 1; }
.top.open { color: #fff; }
.arr { width: 18px; height: 11px; }
.up { transform: scaleY(-1); }
.sub { padding-left: 66px; background: #0f1e2b; }
.menu .sub span { margin-left: 18px; }
.menu .sub.active { background: #3983ee; color: #fff; --cut: #3983ee; }
.lat { letter-spacing: -.4px; }

.main { flex: 1; min-width: 0; background: #f0f2f5; border-left: 2px solid #eee; color: rgba(0,0,0,.85); font-size: 28px; }
.crumbs { height: 96px; background: #fff; border-bottom: 2px solid #eee; display: flex; align-items: center; padding: 0 0 1px 21px; }
.fold { width: 29px; height: 26px; margin-right: 38px; }
.c1 { color: rgba(0,0,0,.65); }
.cd { width: 18px; height: 15px; margin: 0 0 0 11px; color: rgba(0,0,0,.5); }
.slash { margin: 0 15px 0 18px; color: rgba(0,0,0,.5); font-size: 30px; }
.c2 { color: rgba(0,0,0,.45); }
.pagetabs { height: 64px; background: #fff; border-bottom: 2px solid #eee; display: flex; gap: 6px; align-items: flex-end; padding: 0 0 2px 12px; font-size: 24px; }
.pt { width: 120px; height: 56px; border: 2px solid #d9d9d9; border-radius: 4px 4px 0 0; padding-left: 20px; line-height: 56px; }
.pt.on { width: 156px; height: 54px; border: 0; background: #3983ee; color: #fff; padding-left: 24px; display: flex; align-items: center; }
.pt.on svg { width: 13px; height: 13px; margin-left: 8px; }
.content { padding: 32px; display: flex; flex-direction: column; gap: 32px; }
.card { background: #fff; border-radius: 4px; }
.filter { height: 196px; display: flex; padding-top: 24px; line-height: 65px; white-space: nowrap; overflow: hidden; }
.filter label { flex: none; width: 128px; }
.f1 { margin-left: 132px; } .f2 { margin-left: 112px; } .f3 { margin-left: 112px; }
.box { flex: none; height: 64px; border: 2px solid #e8e8e8; border-radius: 4px; padding-left: 22px; line-height: 60px; color: rgba(0,0,0,.28); display: flex; align-items: center; }
.b1 { width: 545px; } .b2 { width: 446px; padding-right: 22px; justify-content: space-between; } .b3 { width: 500px; }
.b2 svg { width: 22px; height: 17px; margin-top: 2px; color: #a0a0a0; }
.list { height: 888px; padding: 14px 12px 0; --cut: #fff; overflow: hidden; }
.list-head { display: flex; justify-content: space-between; align-items: center; padding: 0 631px 0 14px; height: 64px; }
.list h2 { font-size: 32px; font-weight: 600; padding-bottom: 3px; }
.list button { width: 176px; height: 64px; border: 0; border-radius: 4px; background: #3983ee; color: #fff; font: inherit; line-height: 63px; padding: 0; box-shadow: 0 4px 0 rgba(0,0,0,.045); }
table { margin-top: 16px; border-collapse: separate; border-spacing: 0; table-layout: fixed; width: 1867px; border-top: 2px solid #f0f0f0; border-left: 2px solid #f0f0f0; line-height: 44px; }
.k1 { width: 336px; } .k2 { width: 200px; } .k3 { width: 160px; } .k4 { width: 337px; } .k5 { width: 337px; } .k6 { width: 160px; } .k7 { width: 335px; }
th, td { padding: 0; text-align: center; border-right: 2px solid #f0f0f0; border-bottom: 2px solid #f0f0f0; white-space: nowrap; }
th { height: 94px; background: #fafafa; font-weight: 600; }
td { height: 98px; padding-top: 1px; }
th.nm { text-align: left; padding-left: 16px; }
td.nm { text-align: left; padding-left: 26px; }
td.leaf { padding-left: 66px; }
.ex { display: inline-block; width: 13px; height: 22px; margin-right: 25px; vertical-align: 1px; }
.ti { width: 28px; height: 28px; margin: 0 auto 4px; }
.tag { display: inline-block; vertical-align: middle; height: 44px; border: 2px solid; border-radius: 4px; padding: 0 14px; font-size: 24px; line-height: 41px; }
.tag.r { color: #cf1322; background: #fff1f0; border-color: #ffa39e; }
.tag.g { color: #389e0d; background: #f6ffed; border-color: #b7eb8f; }
td.dt { text-align: left; padding-left: 22px; letter-spacing: -1.300px; font-variant-numeric: tabular-nums; }

.mask { position: absolute; inset: 0; background: rgba(0,0,0,.45); }
.shade { position: absolute; left: 420px; right: 0; bottom: 0; height: 84px; background: linear-gradient(rgba(0,0,0,0), rgba(0,0,0,.12)); }

/* settings drawer */
.drawer { position: absolute; top: 0; right: 0; bottom: 0; width: 660px; background: #fff; box-shadow: -12px 0 24px rgba(0,0,0,.16); color: rgba(0,0,0,.85); font-size: 28px; }
.dr-head { height: 114px; border-bottom: 2px solid #f0f0f0; display: flex; justify-content: space-between; align-items: center; padding: 0 44px 0 62px; }
.dr-head h3 { font-size: 32px; font-weight: 600; padding-bottom: 3px; }
.dr-head svg { width: 24px; height: 24px; color: #8c8c8c; margin-bottom: 3px; }
.dr-body { padding: 11px 32px 0; }
.thumbs { display: flex; gap: 32px; }
.th { width: 112px; height: 96px; border-radius: 8px; background: #f0f2f5; overflow: hidden; box-shadow: 0 2px 5px rgba(0,0,0,.18); display: flex; }
.t1 { border: 4px solid #3983ee; background: linear-gradient(#fff 22px, #f0f1f5 22px); }
.t1 i { width: 34px; background: #28314e; }
.t2 { background: linear-gradient(#28314e 24px, #f0f1f5 24px); }
.t2 i { width: 37px; margin-top: 24px; background: #fff; }
.t3 { background: linear-gradient(#28314e 24px, #f0f1f5 24px); }
.t4 { background: linear-gradient(#fff 24px, #f0f1f5 24px); }
.t4 i { width: 45px; background: linear-gradient(90deg, #28314e 28px, #fff 28px); }
.divider { display: flex; align-items: center; gap: 32px; height: 44px; font-size: 32px; font-weight: 600; margin: 36px 0 34px; }
.divider span { padding-bottom: 4px; }
.divider::before, .divider::after { content: ""; flex: 1; height: 2px; background: #f0f0f0; }
.swatches { display: flex; justify-content: space-around; }
.swatches i { width: 40px; height: 40px; border: 2px solid #ddd; border-radius: 4px; display: flex; align-items: center; justify-content: center; color: #fff; }
.swatches svg { width: 22px; height: 18px; }
.swatches .s-main { background: #3983ee; border-color: #3983ee; }
.s-green { background: #4da85c; } .s-blue { background: #2a5fb8; } .s-orange { background: #dc5c2a; } .s-cyan { background: #4193c4; }
.s-white { background: #fff; } .s-navy { background: #041524; } .s-navy2 { background: #021326; } .s-black { background: #151515; } .s-dark { background: #212121; } .s-teal { background: #419486; } .s-indigo { background: #5971d5; } .s-sky { background: #3f8df4; } .s-slate { background: #28314e; }
.swatches .sel { border-color: #3983ee; }
.tenant { position: relative; height: 70px; margin-top: -1px; padding-top: 1px; }
.select { height: 64px; border: 2px solid #4b9af7; border-radius: 4px; box-shadow: 0 0 0 4px rgba(57,131,238,.2); padding: 6px 8px; }
.chip { display: inline-flex; align-items: center; width: 360px; height: 48px; background: #f5f5f5; border: 2px solid #f0f0f0; border-radius: 4px; padding-left: 16px; white-space: nowrap; }
.chip svg { width: 15px; height: 15px; margin-left: auto; margin-right: 11px; color: #8c8c8c; }
.actions { display: flex; position: relative; height: 8px; }
.actions i { flex: 1; background: #3983ee; border-radius: 0 0 4px 4px; }
.actions i + i { background: #e3b755; }
.dropdown { position: absolute; left: 0; top: 71px; width: 596px; height: 144px; padding: 8px 0; background: #fff; border-radius: 4px; box-shadow: 0 6px 20px rgba(0,0,0,.14), 0 4px 8px rgba(0,0,0,.08); }
.opt { height: 64px; line-height: 64px; padding: 0 26px 0 24px; background: #f5f5f5; display: flex; align-items: center; justify-content: space-between; }
.opt.cur { background: #e6f5ff; font-weight: 600; }
.opt svg { width: 26px; height: 21px; color: #3983ee; }
.switches { margin-top: 173px; display: flex; flex-direction: column; gap: 32px; }
.row { height: 44px; display: flex; justify-content: space-between; align-items: center; }
.sw { width: 88px; height: 44px; border-radius: 22px; background: #bfbfbf; color: #fff; font-weight: 500; font-size: 24px; line-height: 42px; display: flex; align-items: center; padding-left: 4px; gap: 10px; }
.sw::before { content: ""; width: 36px; height: 36px; border-radius: 50%; background: #fff; box-shadow: 0 4px 8px rgba(0,35,11,.2); }
.sw.off { background: #e5e5e5; }

/* dock */
.dock { margin: 8px 0 0 63px; width: 2755px; height: 98px; border-radius: 32px; border: 2px solid rgba(255,255,255,.22); padding-left: 4px; display: flex; background: linear-gradient(90deg, #5a606c 0, #5c5f6b 16%, #805868 20%, #8b5a75 32%, #9d5f64 42%, #8b5a70 50%, #935f80 63%, #96566a 80%, #b85f50 100%); background-clip: padding-box; }
.d { width: 80.870px; flex: none; position: relative; display: flex; justify-content: center; padding-top: 12px; }
.d svg { width: 64px; height: 64px; filter: drop-shadow(0 2px 2px rgba(0,0,0,.25)); }
.ov { overflow: visible; }
.run::after { content: ""; position: absolute; left: 50%; bottom: 3px; width: 8px; height: 8px; margin-left: -4px; border-radius: 50%; background: #0a0a0a; }
.badge { position: absolute; top: 5px; right: 1px; width: 28px; height: 28px; border-radius: 50%; background: #e2473b; color: #fff; font-size: 16px; line-height: 28px; text-align: center; letter-spacing: -.5px; }
.cal > div, .txt > div { width: 62px; height: 62px; margin-top: 1px; border-radius: 14px; overflow: hidden; background: #fbfbfa; text-align: center; }
.cal > div { display: flex; flex-direction: column; }
.cal b { background: #e5655a; color: #fff; font-size: 14px; line-height: 19px; font-weight: 500; }
.cal span { font-size: 38px; line-height: 41px; font-weight: 300; letter-spacing: -1px; color: #222; }
.txt > div { font-size: 34px; line-height: 60px; font-weight: 700; letter-spacing: -.5px; }
.ai > div { background: #2d0503; color: #f19b38; }
.ps > div { background: #071c34; color: #4fa4f8; }
.ty > div { font-family: "Liberation Serif", serif; font-size: 50px; color: #2a2a2a; }
.sep { width: 2px; margin: 12px 18px 12px 18px; background: rgba(70,20,30,.45); flex: none; }
.sep.s2 { margin: 12px 17px; }
```
